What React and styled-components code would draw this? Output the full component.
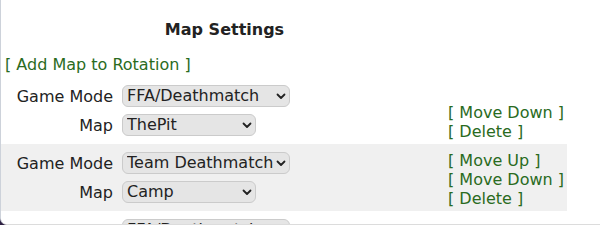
import styled, { createGlobalStyle } from 'styled-components';

const GlobalStyle = createGlobalStyle`
  html, body {
    margin: 0;
    padding: 0;
    background: #2d2042;
  }
  body {
    font-family: "DejaVu Sans", "Liberation Sans", sans-serif;
    font-size: 16px;
    color: #222;
  }
`;

// null keeps an empty line where an action does not apply
const maps = [
  { mode: 'FFA/Deathmatch', map: 'ThePit', actions: [null, 'Move Down', 'Delete'] },
  { mode: 'Team Deathmatch', map: 'Camp', actions: ['Move Up', 'Move Down', 'Delete'] },
  { mode: 'FFA/Deathmatch', map: 'Warehouse', actions: [null, 'Move Up', 'Delete'] },
];

const Chevron = () => (
  <ChevronIcon width='10' height='7' viewBox='0 0 10 7'>
    <path d='M1.5 1.5 L5 5 L8.5 1.5' fill='none' stroke='#222' strokeWidth='1.8' strokeLinecap='round' strokeLinejoin='round' />
  </ChevronIcon>
);

const App = () => {
  return (
    <>
      <GlobalStyle />
      <Panel>
        <Heading>Map Settings</Heading>
        <AddLink href='#'>[ Add Map to Rotation ]</AddLink>
        <List>
          {maps.map((item, i) => (
            <Entry key={i} $shaded={i % 2 === 1}>
              <Fields>
                <Field>
                  <Label>Game Mode</Label>
                  <SelectWrap $width={168}>
                    <Select defaultValue={item.mode}>
                      <option>FFA/Deathmatch</option>
                      <option>Team Deathmatch</option>
                    </Select>
                    <Chevron />
                  </SelectWrap>
                </Field>
                <Field>
                  <Label>Map</Label>
                  <SelectWrap $width={134}>
                    <Select defaultValue={item.map}>
                      <option>ThePit</option>
                      <option>Camp</option>
                      <option>Warehouse</option>
                    </Select>
                    <Chevron />
                  </SelectWrap>
                </Field>
              </Fields>
              <Actions>
                {item.actions.map((a, j) =>
                  a ? (
                    <ActionLink key={j} href='#'>
                      [ {a} ]
                    </ActionLink>
                  ) : (
                    <Spacer key={j}>&nbsp;</Spacer>
                  )
                )}
              </Actions>
            </Entry>
          ))}
        </List>
      </Panel>
    </>
  );
};

const Panel = styled.div`
  box-sizing: border-box;
  height: 225px;
  background: #fff;
  border-left: 1px solid #cdd2da;
  border-bottom: 1px solid #dcdcdc;
  border-bottom-left-radius: 7px;
  overflow: hidden;
`;

const Heading = styled.h3`
  margin: 0;
  padding-top: 20px;
  width: 447px;
  text-align: center;
  font-size: 16px;
  line-height: 19px;
  font-weight: bold;
  color: #222;
`;

const AddLink = styled.a`
  display: block;
  margin: 16px 0 0 4px;
  line-height: 19px;
  color: #2a6b1e;
  text-decoration: none;
`;

const List = styled.div`
  margin-top: 3px;
  width: 566px;
`;

const Entry = styled.div`
  display: flex;
  align-items: center;
  padding: 5px 0;
  background: ${(p) => (p.$shaded ? '#f0f0f0' : '#fff')};
`;

const Fields = styled.div`
  width: 447px;
  display: flex;
  flex-direction: column;
  gap: 7px;
`;

const Field = styled.div`
  display: grid;
  grid-template-columns: 112px auto;
  column-gap: 9px;
  align-items: center;
  justify-content: start;
`;

const Label = styled.span`
  text-align: right;
  line-height: 19px;
  color: #222;
`;

const SelectWrap = styled.div`
  position: relative;
  width: ${(p) => p.$width}px;
  height: 22px;
`;

const Select = styled.select`
  appearance: none;
  box-sizing: border-box;
  width: 100%;
  height: 22px;
  padding: 0 0 0 4px;
  margin: 0;
  font-family: "DejaVu Sans", sans-serif;
  font-size: 16px;
  line-height: 20px;
  color: #222;
  background-color: #e5e5e5;
  border: 1px solid #cbcbcb;
  border-radius: 6px;
`;

const ChevronIcon = styled.svg`
  position: absolute;
  right: 4px;
  top: 8px;
  pointer-events: none;
`;

const Actions = styled.div`
  display: flex;
  flex-direction: column;
  padding-top: 2px;
  margin-bottom: -2px;
`;

const Spacer = styled.span`
  line-height: 19px;
`;

const ActionLink = styled.a`
  line-height: 19px;
  color: #2a6b1e;
  text-decoration: none;
  white-space: nowrap;
`;

export default App;
